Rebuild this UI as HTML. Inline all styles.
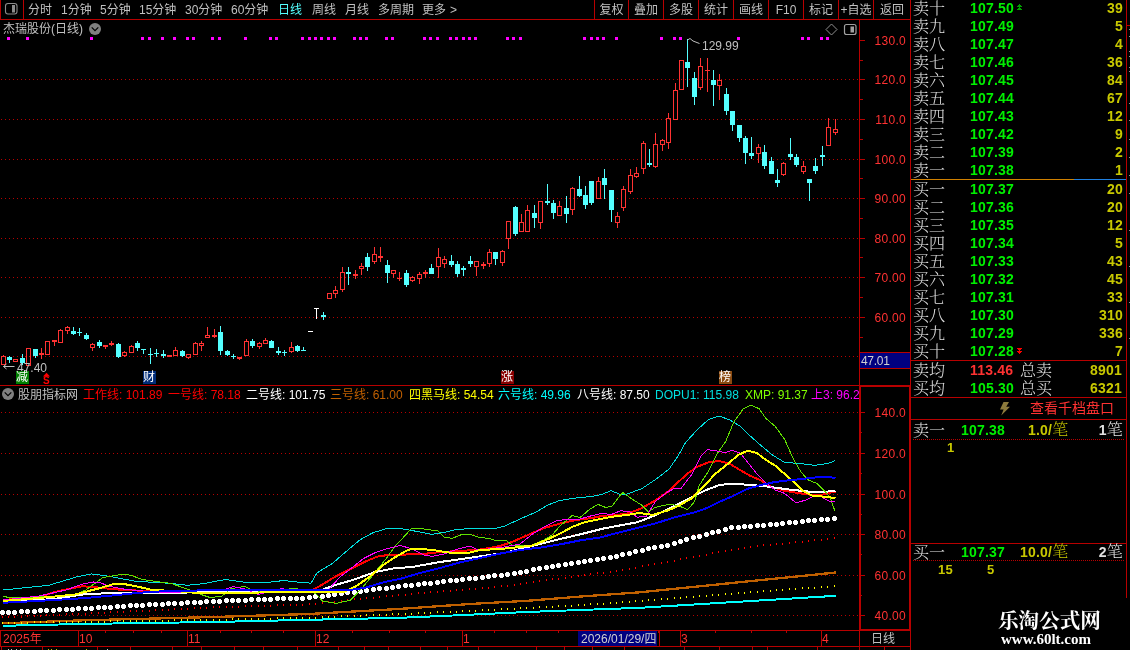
<!DOCTYPE html>
<html lang="zh"><head><meta charset="utf-8"><title>杰瑞股份(日线)</title>
<style>
html,body{margin:0;padding:0;background:#000;}
body{width:1130px;height:650px;position:relative;overflow:hidden;font-family:"Liberation Sans","Noto Sans CJK SC",sans-serif;font-size:12px;color:#c0c0c0;}
#w{position:absolute;left:0;top:0;width:1130px;height:650px;will-change:transform;}
.t{position:absolute;white-space:nowrap;line-height:14px;height:14px;}
.l{position:absolute;background:#b80000;}
svg{position:absolute;left:0;top:0;}
.tb{position:absolute;top:1px;height:18px;line-height:18px;white-space:nowrap;}
.lab{position:absolute;margin-top:1px;left:913px;font:16px/18px "Liberation Serif","Noto Serif CJK SC",serif;color:#e0e0e0;white-space:nowrap;font-weight:300;}
.pr{position:absolute;font:bold 14px/18px "Liberation Sans",sans-serif;white-space:nowrap;letter-spacing:0.2px;}
.g{color:#00f000;} .y{color:#c8c800;} .r{color:#ff3232;}
.ax{position:absolute;right:224px;width:50px;text-align:right;color:#ff3232;font:12px/14px "Liberation Sans",sans-serif;letter-spacing:0.3px;}
.hd{position:absolute;top:388px;line-height:14px;white-space:nowrap;}
</style></head><body><div id="w">

<div class="l" style="left:0;top:19px;width:911px;height:1px"></div>
<div class="l" style="left:0;top:0;width:1px;height:20px"></div>
<div class="l" style="left:23px;top:0;width:1px;height:20px"></div>
<div class="tb" style="left:28px;color:#c0c0c0">分时</div>
<div class="tb" style="left:61px;color:#c0c0c0">1分钟</div>
<div class="tb" style="left:100px;color:#c0c0c0">5分钟</div>
<div class="tb" style="left:139px;color:#c0c0c0">15分钟</div>
<div class="tb" style="left:185px;color:#c0c0c0">30分钟</div>
<div class="tb" style="left:231px;color:#c0c0c0">60分钟</div>
<div class="tb" style="left:278px;color:#54ffff">日线</div>
<div class="tb" style="left:312px;color:#c0c0c0">周线</div>
<div class="tb" style="left:345px;color:#c0c0c0">月线</div>
<div class="tb" style="left:378px;color:#c0c0c0">多周期</div>
<div class="tb" style="left:422px;color:#c0c0c0">更多<span style="margin-left:4px">&gt;</span></div>
<div class="l" style="left:594px;top:0;width:1px;height:19px"></div>
<div class="tb" style="left:595px;width:33px;text-align:center">复权</div>
<div class="l" style="left:628px;top:0;width:1px;height:19px"></div>
<div class="tb" style="left:629px;width:34px;text-align:center">叠加</div>
<div class="l" style="left:663px;top:0;width:1px;height:19px"></div>
<div class="tb" style="left:664px;width:34px;text-align:center">多股</div>
<div class="l" style="left:698px;top:0;width:1px;height:19px"></div>
<div class="tb" style="left:699px;width:34px;text-align:center">统计</div>
<div class="l" style="left:733px;top:0;width:1px;height:19px"></div>
<div class="tb" style="left:734px;width:34px;text-align:center">画线</div>
<div class="l" style="left:768px;top:0;width:1px;height:19px"></div>
<div class="tb" style="left:769px;width:34px;text-align:center">F10</div>
<div class="l" style="left:803px;top:0;width:1px;height:19px"></div>
<div class="tb" style="left:804px;width:34px;text-align:center">标记</div>
<div class="l" style="left:838px;top:0;width:1px;height:19px"></div>
<div class="tb" style="left:839px;width:34px;text-align:center">+自选</div>
<div class="l" style="left:873px;top:0;width:1px;height:19px"></div>
<div class="tb" style="left:874px;width:36px;text-align:center">返回</div>
<div class="l" style="left:910px;top:0;width:1px;height:650px"></div>
<div class="t" style="left:3px;top:22px">杰瑞股份(日线)</div>
<div class="ax" style="top:33.5px">130.0</div>
<div class="ax" style="top:72.5px">120.0</div>
<div class="ax" style="top:112.5px">110.0</div>
<div class="ax" style="top:152.5px">100.0</div>
<div class="ax" style="top:191.5px">90.00</div>
<div class="ax" style="top:231.5px">80.00</div>
<div class="ax" style="top:270.5px">70.00</div>
<div class="ax" style="top:310.5px">60.00</div>
<div class="ax" style="top:405.5px">140.0</div>
<div class="ax" style="top:446.5px">120.0</div>
<div class="ax" style="top:487.5px">100.0</div>
<div class="ax" style="top:527.5px">80.00</div>
<div class="ax" style="top:568.5px">60.00</div>
<div class="ax" style="top:608.5px">40.00</div>
<svg width="1130" height="650" viewBox="0 0 1130 650" shape-rendering="crispEdges">
<line x1="1" y1="79.5" x2="858" y2="79.5" stroke="#b80000" stroke-width="1" stroke-dasharray="1 3"/>
<line x1="1" y1="119.5" x2="858" y2="119.5" stroke="#b80000" stroke-width="1" stroke-dasharray="1 3"/>
<line x1="1" y1="159.5" x2="858" y2="159.5" stroke="#b80000" stroke-width="1" stroke-dasharray="1 3"/>
<line x1="1" y1="198.5" x2="858" y2="198.5" stroke="#b80000" stroke-width="1" stroke-dasharray="1 3"/>
<line x1="1" y1="238.5" x2="858" y2="238.5" stroke="#b80000" stroke-width="1" stroke-dasharray="1 3"/>
<line x1="1" y1="277.5" x2="858" y2="277.5" stroke="#b80000" stroke-width="1" stroke-dasharray="1 3"/>
<line x1="1" y1="317.5" x2="858" y2="317.5" stroke="#b80000" stroke-width="1" stroke-dasharray="1 3"/>
<line x1="1" y1="356.5" x2="858" y2="356.5" stroke="#b80000" stroke-width="1" stroke-dasharray="1 3"/>
<line x1="1" y1="412.5" x2="858" y2="412.5" stroke="#b80000" stroke-width="1" stroke-dasharray="1 3"/>
<line x1="1" y1="453.5" x2="858" y2="453.5" stroke="#b80000" stroke-width="1" stroke-dasharray="1 3"/>
<line x1="1" y1="494.5" x2="858" y2="494.5" stroke="#b80000" stroke-width="1" stroke-dasharray="1 3"/>
<line x1="1" y1="534.5" x2="858" y2="534.5" stroke="#b80000" stroke-width="1" stroke-dasharray="1 3"/>
<line x1="1" y1="575.5" x2="858" y2="575.5" stroke="#b80000" stroke-width="1" stroke-dasharray="1 3"/>
<line x1="1" y1="615.5" x2="858" y2="615.5" stroke="#b80000" stroke-width="1" stroke-dasharray="1 3"/>
<rect x="859" y="20" width="1" height="366" fill="#b80000"/>
<rect x="860" y="40" width="5" height="1" fill="#b80000"/>
<rect x="860" y="60" width="3" height="1" fill="#b80000"/>
<rect x="860" y="79" width="5" height="1" fill="#b80000"/>
<rect x="860" y="99" width="3" height="1" fill="#b80000"/>
<rect x="860" y="119" width="5" height="1" fill="#b80000"/>
<rect x="860" y="139" width="3" height="1" fill="#b80000"/>
<rect x="860" y="159" width="5" height="1" fill="#b80000"/>
<rect x="860" y="178" width="3" height="1" fill="#b80000"/>
<rect x="860" y="198" width="5" height="1" fill="#b80000"/>
<rect x="860" y="218" width="3" height="1" fill="#b80000"/>
<rect x="860" y="238" width="5" height="1" fill="#b80000"/>
<rect x="860" y="257" width="3" height="1" fill="#b80000"/>
<rect x="860" y="277" width="5" height="1" fill="#b80000"/>
<rect x="860" y="297" width="3" height="1" fill="#b80000"/>
<rect x="860" y="317" width="5" height="1" fill="#b80000"/>
<rect x="860" y="337" width="3" height="1" fill="#b80000"/>
<rect x="859" y="352" width="52" height="17" fill="#b80000"/>
<rect x="860" y="353" width="50" height="15" fill="#000080"/>
<rect x="0" y="385" width="911" height="1" fill="#b80000"/>
<rect x="859" y="385" width="2" height="246" fill="#b80000"/>
<rect x="859" y="385" width="52" height="2" fill="#b80000"/>
<rect x="859" y="629" width="52" height="2" fill="#b80000"/>
<rect x="909" y="385" width="2" height="246" fill="#b80000"/>
<rect x="859" y="630" width="1" height="17" fill="#b80000"/>
<rect x="861" y="412" width="4" height="1" fill="#b80000"/>
<rect x="861" y="432" width="1" height="1" fill="#b80000"/>
<rect x="861" y="453" width="4" height="1" fill="#b80000"/>
<rect x="861" y="473" width="1" height="1" fill="#b80000"/>
<rect x="861" y="494" width="4" height="1" fill="#b80000"/>
<rect x="861" y="514" width="1" height="1" fill="#b80000"/>
<rect x="861" y="534" width="4" height="1" fill="#b80000"/>
<rect x="861" y="554" width="1" height="1" fill="#b80000"/>
<rect x="861" y="575" width="4" height="1" fill="#b80000"/>
<rect x="861" y="595" width="1" height="1" fill="#b80000"/>
<rect x="861" y="615" width="4" height="1" fill="#b80000"/>
<rect x="0" y="630" width="859" height="1" fill="#b80000"/>
<rect x="0" y="646" width="911" height="1" fill="#b80000"/>
<rect x="0" y="630" width="1" height="17" fill="#b80000"/>
<rect x="78" y="630" width="1" height="16" fill="#b80000"/>
<rect x="187" y="630" width="1" height="16" fill="#b80000"/>
<rect x="315" y="630" width="1" height="16" fill="#b80000"/>
<rect x="462" y="630" width="1" height="16" fill="#b80000"/>
<rect x="680" y="630" width="1" height="16" fill="#b80000"/>
<rect x="821" y="630" width="1" height="16" fill="#b80000"/>
<rect x="105" y="631" width="1" height="2" fill="#b80000"/>
<rect x="133" y="631" width="1" height="2" fill="#b80000"/>
<rect x="161" y="631" width="1" height="2" fill="#b80000"/>
<rect x="220" y="631" width="1" height="2" fill="#b80000"/>
<rect x="251" y="631" width="1" height="2" fill="#b80000"/>
<rect x="283" y="631" width="1" height="2" fill="#b80000"/>
<rect x="352" y="631" width="1" height="2" fill="#b80000"/>
<rect x="389" y="631" width="1" height="2" fill="#b80000"/>
<rect x="425" y="631" width="1" height="2" fill="#b80000"/>
<rect x="494" y="631" width="1" height="2" fill="#b80000"/>
<rect x="526" y="631" width="1" height="2" fill="#b80000"/>
<rect x="558" y="631" width="1" height="2" fill="#b80000"/>
<rect x="658" y="631" width="1" height="2" fill="#b80000"/>
<rect x="715" y="631" width="1" height="2" fill="#b80000"/>
<rect x="751" y="631" width="1" height="2" fill="#b80000"/>
<rect x="786" y="631" width="1" height="2" fill="#b80000"/>
<rect x="1" y="647" width="1" height="3" fill="#b80000"/>
<rect x="42" y="647" width="1" height="3" fill="#b80000"/>
<rect x="97" y="647" width="1" height="3" fill="#b80000"/>
<rect x="130" y="647" width="1" height="3" fill="#b80000"/>
<rect x="172" y="647" width="1" height="3" fill="#b80000"/>
<rect x="201" y="647" width="1" height="3" fill="#b80000"/>
<rect x="234" y="647" width="1" height="3" fill="#b80000"/>
<rect x="263" y="647" width="1" height="3" fill="#b80000"/>
<rect x="297" y="647" width="1" height="3" fill="#b80000"/>
<rect x="338" y="647" width="1" height="3" fill="#b80000"/>
<rect x="364" y="647" width="1" height="3" fill="#b80000"/>
<rect x="388" y="647" width="1" height="3" fill="#b80000"/>
<rect x="420" y="647" width="1" height="3" fill="#b80000"/>
<rect x="447" y="647" width="1" height="3" fill="#b80000"/>
<rect x="478" y="647" width="1" height="3" fill="#b80000"/>
<rect x="536" y="647" width="1" height="3" fill="#b80000"/>
<rect x="564" y="647" width="1" height="3" fill="#b80000"/>
<rect x="592" y="647" width="1" height="3" fill="#b80000"/>
<rect x="624" y="647" width="1" height="3" fill="#b80000"/>
<rect x="684" y="647" width="1" height="3" fill="#b80000"/>
<rect x="719" y="647" width="1" height="3" fill="#b80000"/>
<rect x="752" y="647" width="1" height="3" fill="#b80000"/>
<rect x="767" y="647" width="1" height="3" fill="#b80000"/>
<rect x="817" y="647" width="1" height="3" fill="#b80000"/>
<rect x="859" y="647" width="1" height="3" fill="#b80000"/>
<rect x="884" y="647" width="1" height="3" fill="#b80000"/>
<rect x="578" y="631" width="79" height="15" fill="#000080"/>
<rect x="659" y="630" width="1" height="16" fill="#b80000"/>
<rect x="7" y="37" width="3" height="3" fill="#ff00ff"/>
<rect x="26" y="37" width="3" height="3" fill="#ff00ff"/>
<rect x="90" y="37" width="3" height="3" fill="#ff00ff"/>
<rect x="141" y="37" width="3" height="3" fill="#ff00ff"/>
<rect x="148" y="37" width="3" height="3" fill="#ff00ff"/>
<rect x="161" y="37" width="3" height="3" fill="#ff00ff"/>
<rect x="173" y="37" width="3" height="3" fill="#ff00ff"/>
<rect x="186" y="37" width="3" height="3" fill="#ff00ff"/>
<rect x="192" y="37" width="3" height="3" fill="#ff00ff"/>
<rect x="211" y="37" width="3" height="3" fill="#ff00ff"/>
<rect x="218" y="37" width="3" height="3" fill="#ff00ff"/>
<rect x="244" y="37" width="3" height="3" fill="#ff00ff"/>
<rect x="269" y="37" width="3" height="3" fill="#ff00ff"/>
<rect x="275" y="37" width="3" height="3" fill="#ff00ff"/>
<rect x="301" y="37" width="3" height="3" fill="#ff00ff"/>
<rect x="308" y="37" width="3" height="3" fill="#ff00ff"/>
<rect x="314" y="37" width="3" height="3" fill="#ff00ff"/>
<rect x="320" y="37" width="3" height="3" fill="#ff00ff"/>
<rect x="327" y="37" width="3" height="3" fill="#ff00ff"/>
<rect x="333" y="37" width="3" height="3" fill="#ff00ff"/>
<rect x="353" y="37" width="3" height="3" fill="#ff00ff"/>
<rect x="359" y="37" width="3" height="3" fill="#ff00ff"/>
<rect x="365" y="37" width="3" height="3" fill="#ff00ff"/>
<rect x="385" y="37" width="3" height="3" fill="#ff00ff"/>
<rect x="391" y="37" width="3" height="3" fill="#ff00ff"/>
<rect x="423" y="37" width="3" height="3" fill="#ff00ff"/>
<rect x="429" y="37" width="3" height="3" fill="#ff00ff"/>
<rect x="436" y="37" width="3" height="3" fill="#ff00ff"/>
<rect x="449" y="37" width="3" height="3" fill="#ff00ff"/>
<rect x="455" y="37" width="3" height="3" fill="#ff00ff"/>
<rect x="462" y="37" width="3" height="3" fill="#ff00ff"/>
<rect x="468" y="37" width="3" height="3" fill="#ff00ff"/>
<rect x="474" y="37" width="3" height="3" fill="#ff00ff"/>
<rect x="506" y="37" width="3" height="3" fill="#ff00ff"/>
<rect x="512" y="37" width="3" height="3" fill="#ff00ff"/>
<rect x="519" y="37" width="3" height="3" fill="#ff00ff"/>
<rect x="583" y="37" width="3" height="3" fill="#ff00ff"/>
<rect x="590" y="37" width="3" height="3" fill="#ff00ff"/>
<rect x="596" y="37" width="3" height="3" fill="#ff00ff"/>
<rect x="602" y="37" width="3" height="3" fill="#ff00ff"/>
<rect x="615" y="37" width="3" height="3" fill="#ff00ff"/>
<rect x="660" y="37" width="3" height="3" fill="#ff00ff"/>
<rect x="673" y="37" width="3" height="3" fill="#ff00ff"/>
<rect x="679" y="37" width="3" height="3" fill="#ff00ff"/>
<rect x="737" y="37" width="3" height="3" fill="#ff00ff"/>
<rect x="801" y="37" width="3" height="3" fill="#ff00ff"/>
<rect x="807" y="37" width="3" height="3" fill="#ff00ff"/>
<rect x="820" y="37" width="3" height="3" fill="#ff00ff"/>
<rect x="826" y="37" width="3" height="3" fill="#ff00ff"/>
<rect x="3" y="355" width="1" height="1" fill="#ff3232"/>
<rect x="1.5" y="356.5" width="4" height="8" fill="none" stroke="#ff3232" stroke-width="1"/>
<rect x="9" y="356" width="1" height="7" fill="#54ffff"/>
<rect x="7" y="357" width="5" height="3" fill="#54ffff"/>
<rect x="13.5" y="359.5" width="4" height="2" fill="none" stroke="#ff3232" stroke-width="1"/>
<rect x="22" y="354" width="1" height="11" fill="#54ffff"/>
<rect x="20" y="358" width="5" height="5" fill="#54ffff"/>
<rect x="26.5" y="348.5" width="4" height="17" fill="none" stroke="#ff3232" stroke-width="1"/>
<rect x="35" y="349" width="1" height="9" fill="#54ffff"/>
<rect x="33" y="349" width="5" height="7" fill="#54ffff"/>
<rect x="41" y="348" width="1" height="11" fill="#ff3232"/>
<rect x="39" y="353" width="5" height="2" fill="#ff3232"/>
<rect x="45.5" y="341.5" width="4" height="13" fill="none" stroke="#ff3232" stroke-width="1"/>
<rect x="54" y="340" width="1" height="6" fill="#ff3232"/>
<rect x="52" y="340" width="5" height="2" fill="#ff3232"/>
<rect x="60" y="329" width="1" height="1" fill="#ff3232"/>
<rect x="58.5" y="330.5" width="4" height="12" fill="none" stroke="#ff3232" stroke-width="1"/>
<rect x="67" y="326" width="1" height="1" fill="#ff3232"/>
<rect x="67" y="331" width="1" height="3" fill="#ff3232"/>
<rect x="65.5" y="327.5" width="4" height="3" fill="none" stroke="#ff3232" stroke-width="1"/>
<rect x="73" y="327" width="1" height="8" fill="#54ffff"/>
<rect x="71" y="331" width="5" height="3" fill="#54ffff"/>
<rect x="79" y="328" width="1" height="8" fill="#54ffff"/>
<rect x="77" y="332" width="5" height="1" fill="#54ffff"/>
<rect x="86" y="333" width="1" height="7" fill="#54ffff"/>
<rect x="84" y="335" width="5" height="4" fill="#54ffff"/>
<rect x="92" y="343" width="1" height="1" fill="#ff3232"/>
<rect x="92" y="348" width="1" height="3" fill="#ff3232"/>
<rect x="90.5" y="344.5" width="4" height="3" fill="none" stroke="#ff3232" stroke-width="1"/>
<rect x="99" y="340" width="1" height="8" fill="#54ffff"/>
<rect x="97" y="342" width="5" height="4" fill="#54ffff"/>
<rect x="105" y="345" width="1" height="4" fill="#ff3232"/>
<rect x="103" y="345" width="5" height="2" fill="#ff3232"/>
<rect x="111" y="341" width="1" height="5" fill="#ff3232"/>
<rect x="109" y="343" width="5" height="2" fill="#ff3232"/>
<rect x="118" y="343" width="1" height="15" fill="#54ffff"/>
<rect x="116" y="344" width="5" height="13" fill="#54ffff"/>
<rect x="124" y="351" width="1" height="1" fill="#ff3232"/>
<rect x="124" y="356" width="1" height="1" fill="#ff3232"/>
<rect x="122.5" y="352.5" width="4" height="3" fill="none" stroke="#ff3232" stroke-width="1"/>
<rect x="131" y="345" width="1" height="1" fill="#ff3232"/>
<rect x="129.5" y="346.5" width="4" height="6" fill="none" stroke="#ff3232" stroke-width="1"/>
<rect x="137" y="341" width="1" height="10" fill="#54ffff"/>
<rect x="135" y="343" width="5" height="5" fill="#54ffff"/>
<rect x="143" y="349" width="1" height="5" fill="#54ffff"/>
<rect x="141" y="349" width="5" height="1" fill="#54ffff"/>
<rect x="150" y="348" width="1" height="16" fill="#54ffff"/>
<rect x="148" y="354" width="5" height="1" fill="#54ffff"/>
<rect x="156" y="349" width="1" height="8" fill="#54ffff"/>
<rect x="154" y="353" width="5" height="1" fill="#54ffff"/>
<rect x="163" y="350" width="1" height="8" fill="#54ffff"/>
<rect x="161" y="354" width="5" height="2" fill="#54ffff"/>
<rect x="169" y="355" width="1" height="2" fill="#ff3232"/>
<rect x="167" y="355" width="5" height="2" fill="#ff3232"/>
<rect x="175" y="347" width="1" height="3" fill="#ff3232"/>
<rect x="173.5" y="350.5" width="4" height="5" fill="none" stroke="#ff3232" stroke-width="1"/>
<rect x="182" y="350" width="1" height="7" fill="#54ffff"/>
<rect x="180" y="351" width="5" height="5" fill="#54ffff"/>
<rect x="188" y="358" width="1" height="1" fill="#ff3232"/>
<rect x="186.5" y="354.5" width="4" height="3" fill="none" stroke="#ff3232" stroke-width="1"/>
<rect x="195" y="342" width="1" height="1" fill="#ff3232"/>
<rect x="193.5" y="343.5" width="4" height="11" fill="none" stroke="#ff3232" stroke-width="1"/>
<rect x="201" y="341" width="1" height="2" fill="#ff3232"/>
<rect x="201" y="346" width="1" height="5" fill="#ff3232"/>
<rect x="199.5" y="343.5" width="4" height="2" fill="none" stroke="#ff3232" stroke-width="1"/>
<rect x="207" y="327" width="1" height="8" fill="#ff3232"/>
<rect x="205.5" y="335.5" width="4" height="2" fill="none" stroke="#ff3232" stroke-width="1"/>
<rect x="214" y="329" width="1" height="9" fill="#ff3232"/>
<rect x="212" y="335" width="5" height="2" fill="#ff3232"/>
<rect x="220" y="326" width="1" height="29" fill="#54ffff"/>
<rect x="218" y="332" width="5" height="19" fill="#54ffff"/>
<rect x="227" y="350" width="1" height="6" fill="#54ffff"/>
<rect x="225" y="351" width="5" height="4" fill="#54ffff"/>
<rect x="233" y="354" width="1" height="5" fill="#54ffff"/>
<rect x="231" y="356" width="5" height="1" fill="#54ffff"/>
<rect x="239" y="357" width="1" height="3" fill="#ff3232"/>
<rect x="237" y="357" width="5" height="2" fill="#ff3232"/>
<rect x="246" y="339" width="1" height="2" fill="#ff3232"/>
<rect x="244.5" y="341.5" width="4" height="14" fill="none" stroke="#ff3232" stroke-width="1"/>
<rect x="252" y="339" width="1" height="9" fill="#54ffff"/>
<rect x="250" y="341" width="5" height="5" fill="#54ffff"/>
<rect x="259" y="342" width="1" height="1" fill="#ff3232"/>
<rect x="259" y="347" width="1" height="2" fill="#ff3232"/>
<rect x="257.5" y="343.5" width="4" height="3" fill="none" stroke="#ff3232" stroke-width="1"/>
<rect x="265" y="338" width="1" height="2" fill="#ff3232"/>
<rect x="263.5" y="340.5" width="4" height="3" fill="none" stroke="#ff3232" stroke-width="1"/>
<rect x="271" y="340" width="1" height="8" fill="#54ffff"/>
<rect x="269" y="341" width="5" height="7" fill="#54ffff"/>
<rect x="278" y="347" width="1" height="8" fill="#54ffff"/>
<rect x="276" y="351" width="5" height="2" fill="#54ffff"/>
<rect x="284" y="350" width="1" height="6" fill="#54ffff"/>
<rect x="282" y="352" width="5" height="1" fill="#54ffff"/>
<rect x="291" y="342" width="1" height="5" fill="#ff3232"/>
<rect x="291" y="352" width="1" height="1" fill="#ff3232"/>
<rect x="289.5" y="347.5" width="4" height="4" fill="none" stroke="#ff3232" stroke-width="1"/>
<rect x="297" y="345" width="1" height="7" fill="#54ffff"/>
<rect x="295" y="346" width="5" height="5" fill="#54ffff"/>
<rect x="303" y="347" width="1" height="4" fill="#54ffff"/>
<rect x="301" y="350" width="5" height="1" fill="#54ffff"/>
<rect x="310" y="331" width="1" height="1" fill="#ffffff"/>
<rect x="308" y="331" width="5" height="1" fill="#ffffff"/>
<rect x="316" y="308" width="1" height="11" fill="#ffffff"/>
<rect x="314" y="308" width="5" height="1" fill="#ffffff"/>
<rect x="323" y="312" width="1" height="8" fill="#54ffff"/>
<rect x="321" y="315" width="5" height="2" fill="#54ffff"/>
<rect x="327.5" y="293.5" width="4" height="5" fill="none" stroke="#ff3232" stroke-width="1"/>
<rect x="335" y="286" width="1" height="4" fill="#ff3232"/>
<rect x="335" y="294" width="1" height="4" fill="#ff3232"/>
<rect x="333.5" y="290.5" width="4" height="3" fill="none" stroke="#ff3232" stroke-width="1"/>
<rect x="342" y="267" width="1" height="5" fill="#ff3232"/>
<rect x="342" y="290" width="1" height="2" fill="#ff3232"/>
<rect x="340.5" y="272.5" width="4" height="17" fill="none" stroke="#ff3232" stroke-width="1"/>
<rect x="348" y="267" width="1" height="18" fill="#54ffff"/>
<rect x="346" y="272" width="5" height="2" fill="#54ffff"/>
<rect x="355" y="270" width="1" height="9" fill="#ff3232"/>
<rect x="353" y="274" width="5" height="2" fill="#ff3232"/>
<rect x="361" y="263" width="1" height="3" fill="#ff3232"/>
<rect x="361" y="269" width="1" height="6" fill="#ff3232"/>
<rect x="359.5" y="266.5" width="4" height="2" fill="none" stroke="#ff3232" stroke-width="1"/>
<rect x="367" y="253" width="1" height="18" fill="#54ffff"/>
<rect x="365" y="257" width="5" height="10" fill="#54ffff"/>
<rect x="374" y="247" width="1" height="7" fill="#ff3232"/>
<rect x="374" y="262" width="1" height="2" fill="#ff3232"/>
<rect x="372.5" y="254.5" width="4" height="7" fill="none" stroke="#ff3232" stroke-width="1"/>
<rect x="380" y="247" width="1" height="15" fill="#ff3232"/>
<rect x="378" y="256" width="5" height="2" fill="#ff3232"/>
<rect x="387" y="260" width="1" height="23" fill="#54ffff"/>
<rect x="385" y="265" width="5" height="8" fill="#54ffff"/>
<rect x="393" y="274" width="1" height="4" fill="#ff3232"/>
<rect x="391.5" y="270.5" width="4" height="3" fill="none" stroke="#ff3232" stroke-width="1"/>
<rect x="399" y="272" width="1" height="9" fill="#ff3232"/>
<rect x="397" y="278" width="5" height="1" fill="#ff3232"/>
<rect x="406" y="270" width="1" height="17" fill="#54ffff"/>
<rect x="404" y="273" width="5" height="12" fill="#54ffff"/>
<rect x="412" y="276" width="1" height="1" fill="#ff3232"/>
<rect x="412" y="281" width="1" height="1" fill="#ff3232"/>
<rect x="410.5" y="277.5" width="4" height="3" fill="none" stroke="#ff3232" stroke-width="1"/>
<rect x="419" y="272" width="1" height="2" fill="#ff3232"/>
<rect x="419" y="279" width="1" height="5" fill="#ff3232"/>
<rect x="417.5" y="274.5" width="4" height="4" fill="none" stroke="#ff3232" stroke-width="1"/>
<rect x="425" y="270" width="1" height="8" fill="#ff3232"/>
<rect x="423" y="272" width="5" height="2" fill="#ff3232"/>
<rect x="431" y="264" width="1" height="10" fill="#54ffff"/>
<rect x="429" y="268" width="5" height="6" fill="#54ffff"/>
<rect x="438" y="248" width="1" height="9" fill="#ff3232"/>
<rect x="438" y="267" width="1" height="11" fill="#ff3232"/>
<rect x="436.5" y="257.5" width="4" height="9" fill="none" stroke="#ff3232" stroke-width="1"/>
<rect x="444" y="256" width="1" height="3" fill="#ff3232"/>
<rect x="444" y="264" width="1" height="4" fill="#ff3232"/>
<rect x="442.5" y="259.5" width="4" height="4" fill="none" stroke="#ff3232" stroke-width="1"/>
<rect x="451" y="255" width="1" height="12" fill="#54ffff"/>
<rect x="449" y="261" width="5" height="4" fill="#54ffff"/>
<rect x="457" y="261" width="1" height="16" fill="#54ffff"/>
<rect x="455" y="264" width="5" height="10" fill="#54ffff"/>
<rect x="463" y="266" width="1" height="10" fill="#54ffff"/>
<rect x="461" y="268" width="5" height="2" fill="#54ffff"/>
<rect x="470" y="256" width="1" height="11" fill="#54ffff"/>
<rect x="468" y="261" width="5" height="3" fill="#54ffff"/>
<rect x="476" y="267" width="1" height="9" fill="#ff3232"/>
<rect x="474.5" y="261.5" width="4" height="5" fill="none" stroke="#ff3232" stroke-width="1"/>
<rect x="483" y="262" width="1" height="7" fill="#ff3232"/>
<rect x="481" y="264" width="5" height="2" fill="#ff3232"/>
<rect x="489" y="249" width="1" height="3" fill="#ff3232"/>
<rect x="489" y="264" width="1" height="3" fill="#ff3232"/>
<rect x="487.5" y="252.5" width="4" height="11" fill="none" stroke="#ff3232" stroke-width="1"/>
<rect x="495" y="252" width="1" height="13" fill="#54ffff"/>
<rect x="493" y="252" width="5" height="7" fill="#54ffff"/>
<rect x="502" y="250" width="1" height="1" fill="#ff3232"/>
<rect x="502" y="263" width="1" height="3" fill="#ff3232"/>
<rect x="500.5" y="251.5" width="4" height="11" fill="none" stroke="#ff3232" stroke-width="1"/>
<rect x="508" y="239" width="1" height="10" fill="#ff3232"/>
<rect x="506.5" y="221.5" width="4" height="17" fill="none" stroke="#ff3232" stroke-width="1"/>
<rect x="515" y="206" width="1" height="30" fill="#54ffff"/>
<rect x="513" y="207" width="5" height="27" fill="#54ffff"/>
<rect x="521" y="214" width="1" height="8" fill="#ff3232"/>
<rect x="519.5" y="222.5" width="4" height="9" fill="none" stroke="#ff3232" stroke-width="1"/>
<rect x="527" y="205" width="1" height="5" fill="#ff3232"/>
<rect x="525.5" y="210.5" width="4" height="21" fill="none" stroke="#ff3232" stroke-width="1"/>
<rect x="534" y="205" width="1" height="23" fill="#54ffff"/>
<rect x="532" y="213" width="5" height="5" fill="#54ffff"/>
<rect x="540" y="223" width="1" height="6" fill="#ff3232"/>
<rect x="538.5" y="201.5" width="4" height="21" fill="none" stroke="#ff3232" stroke-width="1"/>
<rect x="547" y="184" width="1" height="21" fill="#54ffff"/>
<rect x="545" y="201" width="5" height="2" fill="#54ffff"/>
<rect x="553" y="200" width="1" height="19" fill="#54ffff"/>
<rect x="551" y="203" width="5" height="10" fill="#54ffff"/>
<rect x="559" y="201" width="1" height="5" fill="#ff3232"/>
<rect x="557.5" y="206.5" width="4" height="9" fill="none" stroke="#ff3232" stroke-width="1"/>
<rect x="566" y="196" width="1" height="27" fill="#54ffff"/>
<rect x="564" y="208" width="5" height="6" fill="#54ffff"/>
<rect x="572" y="187" width="1" height="1" fill="#ff3232"/>
<rect x="572" y="210" width="1" height="5" fill="#ff3232"/>
<rect x="570.5" y="188.5" width="4" height="21" fill="none" stroke="#ff3232" stroke-width="1"/>
<rect x="579" y="176" width="1" height="21" fill="#54ffff"/>
<rect x="577" y="189" width="5" height="7" fill="#54ffff"/>
<rect x="585" y="186" width="1" height="23" fill="#54ffff"/>
<rect x="583" y="195" width="5" height="10" fill="#54ffff"/>
<rect x="591" y="181" width="1" height="24" fill="#54ffff"/>
<rect x="589" y="181" width="5" height="22" fill="#54ffff"/>
<rect x="598" y="177" width="1" height="4" fill="#ff3232"/>
<rect x="596.5" y="181.5" width="4" height="17" fill="none" stroke="#ff3232" stroke-width="1"/>
<rect x="604" y="169" width="1" height="30" fill="#54ffff"/>
<rect x="602" y="178" width="5" height="7" fill="#54ffff"/>
<rect x="611" y="190" width="1" height="32" fill="#54ffff"/>
<rect x="609" y="190" width="5" height="20" fill="#54ffff"/>
<rect x="617" y="212" width="1" height="4" fill="#ff3232"/>
<rect x="617" y="223" width="1" height="5" fill="#ff3232"/>
<rect x="615.5" y="216.5" width="4" height="6" fill="none" stroke="#ff3232" stroke-width="1"/>
<rect x="623" y="186" width="1" height="3" fill="#ff3232"/>
<rect x="623" y="208" width="1" height="3" fill="#ff3232"/>
<rect x="621.5" y="189.5" width="4" height="18" fill="none" stroke="#ff3232" stroke-width="1"/>
<rect x="630" y="169" width="1" height="6" fill="#ff3232"/>
<rect x="630" y="192" width="1" height="2" fill="#ff3232"/>
<rect x="628.5" y="175.5" width="4" height="16" fill="none" stroke="#ff3232" stroke-width="1"/>
<rect x="636" y="167" width="1" height="6" fill="#ff3232"/>
<rect x="636" y="177" width="1" height="1" fill="#ff3232"/>
<rect x="634.5" y="173.5" width="4" height="3" fill="none" stroke="#ff3232" stroke-width="1"/>
<rect x="643" y="141" width="1" height="2" fill="#ff3232"/>
<rect x="643" y="169" width="1" height="5" fill="#ff3232"/>
<rect x="641.5" y="143.5" width="4" height="25" fill="none" stroke="#ff3232" stroke-width="1"/>
<rect x="649" y="149" width="1" height="18" fill="#54ffff"/>
<rect x="647" y="163" width="5" height="2" fill="#54ffff"/>
<rect x="655" y="133" width="1" height="11" fill="#ff3232"/>
<rect x="655" y="167" width="1" height="1" fill="#ff3232"/>
<rect x="653.5" y="144.5" width="4" height="22" fill="none" stroke="#ff3232" stroke-width="1"/>
<rect x="662" y="139" width="1" height="1" fill="#ff3232"/>
<rect x="662" y="145" width="1" height="6" fill="#ff3232"/>
<rect x="660.5" y="140.5" width="4" height="4" fill="none" stroke="#ff3232" stroke-width="1"/>
<rect x="668" y="113" width="1" height="5" fill="#ff3232"/>
<rect x="668" y="143" width="1" height="6" fill="#ff3232"/>
<rect x="666.5" y="118.5" width="4" height="24" fill="none" stroke="#ff3232" stroke-width="1"/>
<rect x="675" y="83" width="1" height="7" fill="#ff3232"/>
<rect x="673.5" y="90.5" width="4" height="29" fill="none" stroke="#ff3232" stroke-width="1"/>
<rect x="679.5" y="60.5" width="4" height="29" fill="none" stroke="#ff3232" stroke-width="1"/>
<rect x="687" y="39" width="1" height="48" fill="#54ffff"/>
<rect x="685" y="62" width="5" height="6" fill="#54ffff"/>
<rect x="694" y="72" width="1" height="33" fill="#54ffff"/>
<rect x="692" y="78" width="5" height="19" fill="#54ffff"/>
<rect x="700" y="58" width="1" height="8" fill="#ff3232"/>
<rect x="700" y="88" width="1" height="2" fill="#ff3232"/>
<rect x="698.5" y="66.5" width="4" height="21" fill="none" stroke="#ff3232" stroke-width="1"/>
<rect x="707" y="58" width="1" height="34" fill="#ff3232"/>
<rect x="705" y="70" width="5" height="1" fill="#ff3232"/>
<rect x="713" y="70" width="1" height="36" fill="#54ffff"/>
<rect x="711" y="80" width="5" height="5" fill="#54ffff"/>
<rect x="719" y="74" width="1" height="6" fill="#ff3232"/>
<rect x="719" y="86" width="1" height="14" fill="#ff3232"/>
<rect x="717.5" y="80.5" width="4" height="5" fill="none" stroke="#ff3232" stroke-width="1"/>
<rect x="726" y="88" width="1" height="27" fill="#54ffff"/>
<rect x="724" y="94" width="5" height="17" fill="#54ffff"/>
<rect x="732" y="111" width="1" height="20" fill="#54ffff"/>
<rect x="730" y="111" width="5" height="14" fill="#54ffff"/>
<rect x="739" y="125" width="1" height="17" fill="#54ffff"/>
<rect x="737" y="125" width="5" height="13" fill="#54ffff"/>
<rect x="745" y="136" width="1" height="28" fill="#54ffff"/>
<rect x="743" y="138" width="5" height="15" fill="#54ffff"/>
<rect x="751" y="137" width="1" height="22" fill="#54ffff"/>
<rect x="749" y="153" width="5" height="3" fill="#54ffff"/>
<rect x="758" y="144" width="1" height="3" fill="#ff3232"/>
<rect x="758" y="154" width="1" height="9" fill="#ff3232"/>
<rect x="756.5" y="147.5" width="4" height="6" fill="none" stroke="#ff3232" stroke-width="1"/>
<rect x="764" y="145" width="1" height="24" fill="#54ffff"/>
<rect x="762" y="152" width="5" height="14" fill="#54ffff"/>
<rect x="771" y="157" width="1" height="17" fill="#54ffff"/>
<rect x="769" y="161" width="5" height="13" fill="#54ffff"/>
<rect x="777" y="169" width="1" height="18" fill="#54ffff"/>
<rect x="775" y="180" width="5" height="3" fill="#54ffff"/>
<rect x="783" y="162" width="1" height="1" fill="#ff3232"/>
<rect x="783" y="175" width="1" height="1" fill="#ff3232"/>
<rect x="781.5" y="163.5" width="4" height="11" fill="none" stroke="#ff3232" stroke-width="1"/>
<rect x="790" y="138" width="1" height="22" fill="#54ffff"/>
<rect x="788" y="154" width="5" height="3" fill="#54ffff"/>
<rect x="796" y="154" width="1" height="13" fill="#54ffff"/>
<rect x="794" y="157" width="5" height="8" fill="#54ffff"/>
<rect x="803" y="161" width="1" height="5" fill="#ff3232"/>
<rect x="803" y="172" width="1" height="2" fill="#ff3232"/>
<rect x="801.5" y="166.5" width="4" height="5" fill="none" stroke="#ff3232" stroke-width="1"/>
<rect x="809" y="179" width="1" height="22" fill="#54ffff"/>
<rect x="807" y="179" width="5" height="4" fill="#54ffff"/>
<rect x="815" y="158" width="1" height="16" fill="#54ffff"/>
<rect x="813" y="166" width="5" height="5" fill="#54ffff"/>
<rect x="822" y="146" width="1" height="20" fill="#54ffff"/>
<rect x="820" y="155" width="5" height="2" fill="#54ffff"/>
<rect x="828" y="118" width="1" height="9" fill="#ff3232"/>
<rect x="826.5" y="127.5" width="4" height="18" fill="none" stroke="#ff3232" stroke-width="1"/>
<rect x="835" y="119" width="1" height="10" fill="#ff3232"/>
<rect x="835" y="133" width="1" height="2" fill="#ff3232"/>
<rect x="833.5" y="129.5" width="4" height="3" fill="none" stroke="#ff3232" stroke-width="1"/>
<path d="M687.5 40 L690 38.5 L693 41 L699.5 43.5" fill="none" stroke="#c0c0c0" stroke-width="1" shape-rendering="auto"/>
<path d="M3.5 366.5 H14.5 M3.5 366.5 l3 -2.5 M3.5 366.5 l3 2.5" fill="none" stroke="#c0c0c0" stroke-width="1" shape-rendering="auto"/>
<polyline points="3.0,600.0 39.0,597.0 58.4,591.0 81.8,586.3 93.5,586.9 109.0,588.8 124.6,590.0 148.0,591.0 200.0,591.0 311.0,591.0 324.6,583.2 336.3,576.0 348.0,570.2 365.5,561.4 379.0,556.0 394.7,554.6 420.0,554.4 440.0,552.0 460.0,551.0 480.0,549.6 500.0,546.0 512.0,542.0 528.0,535.0 544.0,528.0 560.0,523.6 576.0,520.0 592.0,518.0 604.0,515.6 613.8,515.3 627.7,513.5 641.5,508.4 655.4,500.3 669.0,491.0 678.4,481.9 687.7,473.4 697.0,466.9 708.4,462.3 718.8,461.0 729.0,463.4 740.7,470.4 750.0,475.7 761.5,480.7 770.7,486.5 784.5,490.8 798.4,493.0 812.2,495.0 821.5,494.8 830.7,492.6 835.5,492.0" fill="none" stroke="#ff0000" stroke-width="2" stroke-linejoin="round" />
<rect x="2" y="616" width="1" height="2" fill="#ff0000"/>
<rect x="8" y="616" width="1" height="2" fill="#ff0000"/>
<rect x="14" y="616" width="1" height="2" fill="#ff0000"/>
<rect x="21" y="616" width="1" height="2" fill="#ff0000"/>
<rect x="27" y="615" width="1" height="2" fill="#ff0000"/>
<rect x="34" y="615" width="1" height="2" fill="#ff0000"/>
<rect x="40" y="615" width="1" height="2" fill="#ff0000"/>
<rect x="46" y="614" width="1" height="2" fill="#ff0000"/>
<rect x="53" y="614" width="1" height="2" fill="#ff0000"/>
<rect x="59" y="614" width="1" height="2" fill="#ff0000"/>
<rect x="66" y="613" width="1" height="2" fill="#ff0000"/>
<rect x="72" y="613" width="1" height="2" fill="#ff0000"/>
<rect x="78" y="613" width="1" height="2" fill="#ff0000"/>
<rect x="85" y="613" width="1" height="2" fill="#ff0000"/>
<rect x="91" y="612" width="1" height="2" fill="#ff0000"/>
<rect x="98" y="612" width="1" height="2" fill="#ff0000"/>
<rect x="104" y="612" width="1" height="2" fill="#ff0000"/>
<rect x="110" y="611" width="1" height="2" fill="#ff0000"/>
<rect x="117" y="611" width="1" height="2" fill="#ff0000"/>
<rect x="123" y="611" width="1" height="2" fill="#ff0000"/>
<rect x="130" y="610" width="1" height="2" fill="#ff0000"/>
<rect x="136" y="610" width="1" height="2" fill="#ff0000"/>
<rect x="142" y="610" width="1" height="2" fill="#ff0000"/>
<rect x="149" y="610" width="1" height="2" fill="#ff0000"/>
<rect x="155" y="609" width="1" height="2" fill="#ff0000"/>
<rect x="162" y="609" width="1" height="2" fill="#ff0000"/>
<rect x="168" y="609" width="1" height="2" fill="#ff0000"/>
<rect x="174" y="608" width="1" height="2" fill="#ff0000"/>
<rect x="181" y="608" width="1" height="2" fill="#ff0000"/>
<rect x="187" y="608" width="1" height="2" fill="#ff0000"/>
<rect x="194" y="607" width="1" height="2" fill="#ff0000"/>
<rect x="200" y="607" width="1" height="2" fill="#ff0000"/>
<rect x="206" y="607" width="1" height="2" fill="#ff0000"/>
<rect x="213" y="606" width="1" height="2" fill="#ff0000"/>
<rect x="219" y="606" width="1" height="2" fill="#ff0000"/>
<rect x="226" y="606" width="1" height="2" fill="#ff0000"/>
<rect x="232" y="606" width="1" height="2" fill="#ff0000"/>
<rect x="238" y="606" width="1" height="2" fill="#ff0000"/>
<rect x="245" y="605" width="1" height="2" fill="#ff0000"/>
<rect x="251" y="605" width="1" height="2" fill="#ff0000"/>
<rect x="258" y="605" width="1" height="2" fill="#ff0000"/>
<rect x="264" y="605" width="1" height="2" fill="#ff0000"/>
<rect x="270" y="605" width="1" height="2" fill="#ff0000"/>
<rect x="277" y="604" width="1" height="2" fill="#ff0000"/>
<rect x="283" y="604" width="1" height="2" fill="#ff0000"/>
<rect x="290" y="604" width="1" height="2" fill="#ff0000"/>
<rect x="296" y="604" width="1" height="2" fill="#ff0000"/>
<rect x="302" y="604" width="1" height="2" fill="#ff0000"/>
<rect x="309" y="603" width="1" height="2" fill="#ff0000"/>
<rect x="315" y="603" width="1" height="2" fill="#ff0000"/>
<rect x="322" y="602" width="1" height="2" fill="#ff0000"/>
<rect x="328" y="601" width="1" height="2" fill="#ff0000"/>
<rect x="334" y="601" width="1" height="2" fill="#ff0000"/>
<rect x="341" y="600" width="1" height="2" fill="#ff0000"/>
<rect x="347" y="599" width="1" height="2" fill="#ff0000"/>
<rect x="354" y="598" width="1" height="2" fill="#ff0000"/>
<rect x="360" y="598" width="1" height="2" fill="#ff0000"/>
<rect x="366" y="597" width="1" height="2" fill="#ff0000"/>
<rect x="373" y="597" width="1" height="2" fill="#ff0000"/>
<rect x="379" y="596" width="1" height="2" fill="#ff0000"/>
<rect x="386" y="595" width="1" height="2" fill="#ff0000"/>
<rect x="392" y="595" width="1" height="2" fill="#ff0000"/>
<rect x="398" y="594" width="1" height="2" fill="#ff0000"/>
<rect x="405" y="594" width="1" height="2" fill="#ff0000"/>
<rect x="411" y="593" width="1" height="2" fill="#ff0000"/>
<rect x="418" y="592" width="1" height="2" fill="#ff0000"/>
<rect x="424" y="592" width="1" height="2" fill="#ff0000"/>
<rect x="430" y="591" width="1" height="2" fill="#ff0000"/>
<rect x="437" y="591" width="1" height="2" fill="#ff0000"/>
<rect x="443" y="590" width="1" height="2" fill="#ff0000"/>
<rect x="450" y="590" width="1" height="2" fill="#ff0000"/>
<rect x="456" y="589" width="1" height="2" fill="#ff0000"/>
<rect x="462" y="589" width="1" height="2" fill="#ff0000"/>
<rect x="469" y="588" width="1" height="2" fill="#ff0000"/>
<rect x="475" y="588" width="1" height="2" fill="#ff0000"/>
<rect x="482" y="587" width="1" height="2" fill="#ff0000"/>
<rect x="488" y="587" width="1" height="2" fill="#ff0000"/>
<rect x="494" y="586" width="1" height="2" fill="#ff0000"/>
<rect x="501" y="585" width="1" height="2" fill="#ff0000"/>
<rect x="507" y="585" width="1" height="2" fill="#ff0000"/>
<rect x="514" y="584" width="1" height="2" fill="#ff0000"/>
<rect x="520" y="583" width="1" height="2" fill="#ff0000"/>
<rect x="526" y="582" width="1" height="2" fill="#ff0000"/>
<rect x="533" y="581" width="1" height="2" fill="#ff0000"/>
<rect x="539" y="580" width="1" height="2" fill="#ff0000"/>
<rect x="546" y="579" width="1" height="2" fill="#ff0000"/>
<rect x="552" y="578" width="1" height="2" fill="#ff0000"/>
<rect x="558" y="578" width="1" height="2" fill="#ff0000"/>
<rect x="565" y="577" width="1" height="2" fill="#ff0000"/>
<rect x="571" y="576" width="1" height="2" fill="#ff0000"/>
<rect x="578" y="575" width="1" height="2" fill="#ff0000"/>
<rect x="584" y="574" width="1" height="2" fill="#ff0000"/>
<rect x="590" y="573" width="1" height="2" fill="#ff0000"/>
<rect x="597" y="572" width="1" height="2" fill="#ff0000"/>
<rect x="603" y="572" width="1" height="2" fill="#ff0000"/>
<rect x="610" y="571" width="1" height="2" fill="#ff0000"/>
<rect x="616" y="570" width="1" height="2" fill="#ff0000"/>
<rect x="622" y="569" width="1" height="2" fill="#ff0000"/>
<rect x="629" y="568" width="1" height="2" fill="#ff0000"/>
<rect x="635" y="567" width="1" height="2" fill="#ff0000"/>
<rect x="642" y="565" width="1" height="2" fill="#ff0000"/>
<rect x="648" y="564" width="1" height="2" fill="#ff0000"/>
<rect x="654" y="563" width="1" height="2" fill="#ff0000"/>
<rect x="661" y="562" width="1" height="2" fill="#ff0000"/>
<rect x="667" y="561" width="1" height="2" fill="#ff0000"/>
<rect x="674" y="560" width="1" height="2" fill="#ff0000"/>
<rect x="680" y="558" width="1" height="2" fill="#ff0000"/>
<rect x="686" y="557" width="1" height="2" fill="#ff0000"/>
<rect x="693" y="556" width="1" height="2" fill="#ff0000"/>
<rect x="699" y="555" width="1" height="2" fill="#ff0000"/>
<rect x="706" y="554" width="1" height="2" fill="#ff0000"/>
<rect x="712" y="552" width="1" height="2" fill="#ff0000"/>
<rect x="718" y="551" width="1" height="2" fill="#ff0000"/>
<rect x="725" y="550" width="1" height="2" fill="#ff0000"/>
<rect x="731" y="549" width="1" height="2" fill="#ff0000"/>
<rect x="738" y="548" width="1" height="2" fill="#ff0000"/>
<rect x="744" y="547" width="1" height="2" fill="#ff0000"/>
<rect x="750" y="546" width="1" height="2" fill="#ff0000"/>
<rect x="757" y="545" width="1" height="2" fill="#ff0000"/>
<rect x="763" y="544" width="1" height="2" fill="#ff0000"/>
<rect x="770" y="544" width="1" height="2" fill="#ff0000"/>
<rect x="776" y="543" width="1" height="2" fill="#ff0000"/>
<rect x="782" y="543" width="1" height="2" fill="#ff0000"/>
<rect x="789" y="542" width="1" height="2" fill="#ff0000"/>
<rect x="795" y="541" width="1" height="2" fill="#ff0000"/>
<rect x="802" y="541" width="1" height="2" fill="#ff0000"/>
<rect x="808" y="540" width="1" height="2" fill="#ff0000"/>
<rect x="814" y="539" width="1" height="2" fill="#ff0000"/>
<rect x="821" y="539" width="1" height="2" fill="#ff0000"/>
<rect x="827" y="538" width="1" height="2" fill="#ff0000"/>
<rect x="834" y="537" width="1" height="2" fill="#ff0000"/>
<polyline points="3.0,602.0 54.5,599.0 85.7,594.0 116.8,593.0 155.8,593.0 220.0,592.0 316.8,591.6 336.3,584.8 355.8,579.0 375.0,572.0 394.7,568.2 412.0,567.0 440.0,562.0 480.0,556.4 504.0,553.0 532.0,546.0 560.0,539.0 580.0,534.4 604.0,528.4 618.5,525.7 637.0,522.3 655.4,515.3 673.8,506.0 692.3,496.9 706.0,490.0 720.0,484.9 733.8,483.5 747.6,484.9 761.5,485.8 775.3,487.7 789.2,489.5 803.0,491.0 816.8,492.3 835.5,491.0" fill="none" stroke="#ffffff" stroke-width="2" stroke-linejoin="round" />
<polyline points="3.0,623.3 80.0,620.4 214.0,617.0 309.0,614.0 400.0,608.9 470.0,604.0 527.0,600.8 580.0,596.6 640.0,592.3 836.0,572.5" fill="none" stroke="#c06000" stroke-width="2.3" stroke-linejoin="round" />
<rect x="2" y="622" width="1" height="2" fill="#ffff00"/>
<rect x="8" y="622" width="1" height="2" fill="#ffff00"/>
<rect x="14" y="622" width="1" height="2" fill="#ffff00"/>
<rect x="21" y="622" width="1" height="2" fill="#ffff00"/>
<rect x="27" y="622" width="1" height="2" fill="#ffff00"/>
<rect x="34" y="621" width="1" height="2" fill="#ffff00"/>
<rect x="40" y="621" width="1" height="2" fill="#ffff00"/>
<rect x="46" y="621" width="1" height="2" fill="#ffff00"/>
<rect x="53" y="621" width="1" height="2" fill="#ffff00"/>
<rect x="59" y="621" width="1" height="2" fill="#ffff00"/>
<rect x="66" y="621" width="1" height="2" fill="#ffff00"/>
<rect x="72" y="621" width="1" height="2" fill="#ffff00"/>
<rect x="78" y="621" width="1" height="2" fill="#ffff00"/>
<rect x="85" y="621" width="1" height="2" fill="#ffff00"/>
<rect x="91" y="621" width="1" height="2" fill="#ffff00"/>
<rect x="98" y="621" width="1" height="2" fill="#ffff00"/>
<rect x="104" y="621" width="1" height="2" fill="#ffff00"/>
<rect x="110" y="620" width="1" height="2" fill="#ffff00"/>
<rect x="117" y="620" width="1" height="2" fill="#ffff00"/>
<rect x="123" y="620" width="1" height="2" fill="#ffff00"/>
<rect x="130" y="620" width="1" height="2" fill="#ffff00"/>
<rect x="136" y="620" width="1" height="2" fill="#ffff00"/>
<rect x="142" y="620" width="1" height="2" fill="#ffff00"/>
<rect x="149" y="620" width="1" height="2" fill="#ffff00"/>
<rect x="155" y="620" width="1" height="2" fill="#ffff00"/>
<rect x="162" y="620" width="1" height="2" fill="#ffff00"/>
<rect x="168" y="620" width="1" height="2" fill="#ffff00"/>
<rect x="174" y="619" width="1" height="2" fill="#ffff00"/>
<rect x="181" y="619" width="1" height="2" fill="#ffff00"/>
<rect x="187" y="619" width="1" height="2" fill="#ffff00"/>
<rect x="194" y="619" width="1" height="2" fill="#ffff00"/>
<rect x="200" y="619" width="1" height="2" fill="#ffff00"/>
<rect x="206" y="619" width="1" height="2" fill="#ffff00"/>
<rect x="213" y="619" width="1" height="2" fill="#ffff00"/>
<rect x="219" y="619" width="1" height="2" fill="#ffff00"/>
<rect x="226" y="619" width="1" height="2" fill="#ffff00"/>
<rect x="232" y="618" width="1" height="2" fill="#ffff00"/>
<rect x="238" y="618" width="1" height="2" fill="#ffff00"/>
<rect x="245" y="618" width="1" height="2" fill="#ffff00"/>
<rect x="251" y="618" width="1" height="2" fill="#ffff00"/>
<rect x="258" y="618" width="1" height="2" fill="#ffff00"/>
<rect x="264" y="618" width="1" height="2" fill="#ffff00"/>
<rect x="270" y="618" width="1" height="2" fill="#ffff00"/>
<rect x="277" y="617" width="1" height="2" fill="#ffff00"/>
<rect x="283" y="617" width="1" height="2" fill="#ffff00"/>
<rect x="290" y="617" width="1" height="2" fill="#ffff00"/>
<rect x="296" y="617" width="1" height="2" fill="#ffff00"/>
<rect x="302" y="617" width="1" height="2" fill="#ffff00"/>
<rect x="309" y="617" width="1" height="2" fill="#ffff00"/>
<rect x="315" y="617" width="1" height="2" fill="#ffff00"/>
<rect x="322" y="616" width="1" height="2" fill="#ffff00"/>
<rect x="328" y="616" width="1" height="2" fill="#ffff00"/>
<rect x="334" y="616" width="1" height="2" fill="#ffff00"/>
<rect x="341" y="615" width="1" height="2" fill="#ffff00"/>
<rect x="347" y="615" width="1" height="2" fill="#ffff00"/>
<rect x="354" y="615" width="1" height="2" fill="#ffff00"/>
<rect x="360" y="615" width="1" height="2" fill="#ffff00"/>
<rect x="366" y="614" width="1" height="2" fill="#ffff00"/>
<rect x="373" y="614" width="1" height="2" fill="#ffff00"/>
<rect x="379" y="614" width="1" height="2" fill="#ffff00"/>
<rect x="386" y="614" width="1" height="2" fill="#ffff00"/>
<rect x="392" y="613" width="1" height="2" fill="#ffff00"/>
<rect x="398" y="613" width="1" height="2" fill="#ffff00"/>
<rect x="405" y="613" width="1" height="2" fill="#ffff00"/>
<rect x="411" y="613" width="1" height="2" fill="#ffff00"/>
<rect x="418" y="612" width="1" height="2" fill="#ffff00"/>
<rect x="424" y="612" width="1" height="2" fill="#ffff00"/>
<rect x="430" y="612" width="1" height="2" fill="#ffff00"/>
<rect x="437" y="611" width="1" height="2" fill="#ffff00"/>
<rect x="443" y="611" width="1" height="2" fill="#ffff00"/>
<rect x="450" y="611" width="1" height="2" fill="#ffff00"/>
<rect x="456" y="611" width="1" height="2" fill="#ffff00"/>
<rect x="462" y="610" width="1" height="2" fill="#ffff00"/>
<rect x="469" y="610" width="1" height="2" fill="#ffff00"/>
<rect x="475" y="610" width="1" height="2" fill="#ffff00"/>
<rect x="482" y="609" width="1" height="2" fill="#ffff00"/>
<rect x="488" y="609" width="1" height="2" fill="#ffff00"/>
<rect x="494" y="609" width="1" height="2" fill="#ffff00"/>
<rect x="501" y="608" width="1" height="2" fill="#ffff00"/>
<rect x="507" y="608" width="1" height="2" fill="#ffff00"/>
<rect x="514" y="608" width="1" height="2" fill="#ffff00"/>
<rect x="520" y="607" width="1" height="2" fill="#ffff00"/>
<rect x="526" y="607" width="1" height="2" fill="#ffff00"/>
<rect x="533" y="607" width="1" height="2" fill="#ffff00"/>
<rect x="539" y="606" width="1" height="2" fill="#ffff00"/>
<rect x="546" y="606" width="1" height="2" fill="#ffff00"/>
<rect x="552" y="606" width="1" height="2" fill="#ffff00"/>
<rect x="558" y="605" width="1" height="2" fill="#ffff00"/>
<rect x="565" y="605" width="1" height="2" fill="#ffff00"/>
<rect x="571" y="605" width="1" height="2" fill="#ffff00"/>
<rect x="578" y="604" width="1" height="2" fill="#ffff00"/>
<rect x="584" y="604" width="1" height="2" fill="#ffff00"/>
<rect x="590" y="603" width="1" height="2" fill="#ffff00"/>
<rect x="597" y="603" width="1" height="2" fill="#ffff00"/>
<rect x="603" y="603" width="1" height="2" fill="#ffff00"/>
<rect x="610" y="602" width="1" height="2" fill="#ffff00"/>
<rect x="616" y="602" width="1" height="2" fill="#ffff00"/>
<rect x="622" y="601" width="1" height="2" fill="#ffff00"/>
<rect x="629" y="601" width="1" height="2" fill="#ffff00"/>
<rect x="635" y="600" width="1" height="2" fill="#ffff00"/>
<rect x="642" y="600" width="1" height="2" fill="#ffff00"/>
<rect x="648" y="599" width="1" height="2" fill="#ffff00"/>
<rect x="654" y="599" width="1" height="2" fill="#ffff00"/>
<rect x="661" y="598" width="1" height="2" fill="#ffff00"/>
<rect x="667" y="598" width="1" height="2" fill="#ffff00"/>
<rect x="674" y="597" width="1" height="2" fill="#ffff00"/>
<rect x="680" y="597" width="1" height="2" fill="#ffff00"/>
<rect x="686" y="596" width="1" height="2" fill="#ffff00"/>
<rect x="693" y="596" width="1" height="2" fill="#ffff00"/>
<rect x="699" y="595" width="1" height="2" fill="#ffff00"/>
<rect x="706" y="595" width="1" height="2" fill="#ffff00"/>
<rect x="712" y="594" width="1" height="2" fill="#ffff00"/>
<rect x="718" y="594" width="1" height="2" fill="#ffff00"/>
<rect x="725" y="593" width="1" height="2" fill="#ffff00"/>
<rect x="731" y="593" width="1" height="2" fill="#ffff00"/>
<rect x="738" y="592" width="1" height="2" fill="#ffff00"/>
<rect x="744" y="592" width="1" height="2" fill="#ffff00"/>
<rect x="750" y="591" width="1" height="2" fill="#ffff00"/>
<rect x="757" y="591" width="1" height="2" fill="#ffff00"/>
<rect x="763" y="590" width="1" height="2" fill="#ffff00"/>
<rect x="770" y="590" width="1" height="2" fill="#ffff00"/>
<rect x="776" y="589" width="1" height="2" fill="#ffff00"/>
<rect x="782" y="589" width="1" height="2" fill="#ffff00"/>
<rect x="789" y="588" width="1" height="2" fill="#ffff00"/>
<rect x="795" y="588" width="1" height="2" fill="#ffff00"/>
<rect x="802" y="587" width="1" height="2" fill="#ffff00"/>
<rect x="808" y="587" width="1" height="2" fill="#ffff00"/>
<rect x="814" y="587" width="1" height="2" fill="#ffff00"/>
<rect x="821" y="586" width="1" height="2" fill="#ffff00"/>
<rect x="827" y="586" width="1" height="2" fill="#ffff00"/>
<rect x="834" y="585" width="1" height="2" fill="#ffff00"/>
<polyline points="3.0,625.8 80.0,624.0 214.0,622.0 309.0,619.8 400.0,617.8 464.0,615.0 527.0,612.0 580.0,610.0 640.0,607.8 836.0,595.8" fill="none" stroke="#00ffff" stroke-width="2" stroke-linejoin="round" />
<path d="M1 610h3v1h1v3h-1v1h-3v-1h-1v-3h1zM7 610h3v1h1v3h-1v1h-3v-1h-1v-3h1zM13 610h3v1h1v3h-1v1h-3v-1h-1v-3h1zM20 609h3v1h1v3h-1v1h-3v-1h-1v-3h1zM26 609h3v1h1v3h-1v1h-3v-1h-1v-3h1zM33 609h3v1h1v3h-1v1h-3v-1h-1v-3h1zM39 608h3v1h1v3h-1v1h-3v-1h-1v-3h1zM45 608h3v1h1v3h-1v1h-3v-1h-1v-3h1zM52 608h3v1h1v3h-1v1h-3v-1h-1v-3h1zM58 607h3v1h1v3h-1v1h-3v-1h-1v-3h1zM65 607h3v1h1v3h-1v1h-3v-1h-1v-3h1zM71 607h3v1h1v3h-1v1h-3v-1h-1v-3h1zM77 606h3v1h1v3h-1v1h-3v-1h-1v-3h1zM84 606h3v1h1v3h-1v1h-3v-1h-1v-3h1zM90 606h3v1h1v3h-1v1h-3v-1h-1v-3h1zM97 605h3v1h1v3h-1v1h-3v-1h-1v-3h1zM103 605h3v1h1v3h-1v1h-3v-1h-1v-3h1zM109 605h3v1h1v3h-1v1h-3v-1h-1v-3h1zM116 604h3v1h1v3h-1v1h-3v-1h-1v-3h1zM122 604h3v1h1v3h-1v1h-3v-1h-1v-3h1zM129 603h3v1h1v3h-1v1h-3v-1h-1v-3h1zM135 603h3v1h1v3h-1v1h-3v-1h-1v-3h1zM141 603h3v1h1v3h-1v1h-3v-1h-1v-3h1zM148 602h3v1h1v3h-1v1h-3v-1h-1v-3h1zM154 602h3v1h1v3h-1v1h-3v-1h-1v-3h1zM161 602h3v1h1v3h-1v1h-3v-1h-1v-3h1zM167 601h3v1h1v3h-1v1h-3v-1h-1v-3h1zM173 601h3v1h1v3h-1v1h-3v-1h-1v-3h1zM180 601h3v1h1v3h-1v1h-3v-1h-1v-3h1zM186 600h3v1h1v3h-1v1h-3v-1h-1v-3h1zM193 600h3v1h1v3h-1v1h-3v-1h-1v-3h1zM199 600h3v1h1v3h-1v1h-3v-1h-1v-3h1zM205 599h3v1h1v3h-1v1h-3v-1h-1v-3h1zM212 599h3v1h1v3h-1v1h-3v-1h-1v-3h1zM218 599h3v1h1v3h-1v1h-3v-1h-1v-3h1zM225 598h3v1h1v3h-1v1h-3v-1h-1v-3h1zM231 598h3v1h1v3h-1v1h-3v-1h-1v-3h1zM237 598h3v1h1v3h-1v1h-3v-1h-1v-3h1zM244 598h3v1h1v3h-1v1h-3v-1h-1v-3h1zM250 597h3v1h1v3h-1v1h-3v-1h-1v-3h1zM257 597h3v1h1v3h-1v1h-3v-1h-1v-3h1zM263 597h3v1h1v3h-1v1h-3v-1h-1v-3h1zM269 597h3v1h1v3h-1v1h-3v-1h-1v-3h1zM276 596h3v1h1v3h-1v1h-3v-1h-1v-3h1zM282 596h3v1h1v3h-1v1h-3v-1h-1v-3h1zM289 596h3v1h1v3h-1v1h-3v-1h-1v-3h1zM295 596h3v1h1v3h-1v1h-3v-1h-1v-3h1zM301 596h3v1h1v3h-1v1h-3v-1h-1v-3h1zM308 595h3v1h1v3h-1v1h-3v-1h-1v-3h1zM314 594h3v1h1v3h-1v1h-3v-1h-1v-3h1zM321 594h3v1h1v3h-1v1h-3v-1h-1v-3h1zM327 593h3v1h1v3h-1v1h-3v-1h-1v-3h1zM333 592h3v1h1v3h-1v1h-3v-1h-1v-3h1zM340 591h3v1h1v3h-1v1h-3v-1h-1v-3h1zM346 590h3v1h1v3h-1v1h-3v-1h-1v-3h1zM353 590h3v1h1v3h-1v1h-3v-1h-1v-3h1zM359 589h3v1h1v3h-1v1h-3v-1h-1v-3h1zM365 588h3v1h1v3h-1v1h-3v-1h-1v-3h1zM372 587h3v1h1v3h-1v1h-3v-1h-1v-3h1zM378 586h3v1h1v3h-1v1h-3v-1h-1v-3h1zM385 586h3v1h1v3h-1v1h-3v-1h-1v-3h1zM391 585h3v1h1v3h-1v1h-3v-1h-1v-3h1zM397 584h3v1h1v3h-1v1h-3v-1h-1v-3h1zM404 583h3v1h1v3h-1v1h-3v-1h-1v-3h1zM410 583h3v1h1v3h-1v1h-3v-1h-1v-3h1zM417 582h3v1h1v3h-1v1h-3v-1h-1v-3h1zM423 581h3v1h1v3h-1v1h-3v-1h-1v-3h1zM429 581h3v1h1v3h-1v1h-3v-1h-1v-3h1zM436 580h3v1h1v3h-1v1h-3v-1h-1v-3h1zM442 579h3v1h1v3h-1v1h-3v-1h-1v-3h1zM449 578h3v1h1v3h-1v1h-3v-1h-1v-3h1zM455 578h3v1h1v3h-1v1h-3v-1h-1v-3h1zM461 577h3v1h1v3h-1v1h-3v-1h-1v-3h1zM468 576h3v1h1v3h-1v1h-3v-1h-1v-3h1zM474 576h3v1h1v3h-1v1h-3v-1h-1v-3h1zM481 575h3v1h1v3h-1v1h-3v-1h-1v-3h1zM487 574h3v1h1v3h-1v1h-3v-1h-1v-3h1zM493 573h3v1h1v3h-1v1h-3v-1h-1v-3h1zM500 573h3v1h1v3h-1v1h-3v-1h-1v-3h1zM506 572h3v1h1v3h-1v1h-3v-1h-1v-3h1zM513 571h3v1h1v3h-1v1h-3v-1h-1v-3h1zM519 570h3v1h1v3h-1v1h-3v-1h-1v-3h1zM525 569h3v1h1v3h-1v1h-3v-1h-1v-3h1zM532 567h3v1h1v3h-1v1h-3v-1h-1v-3h1zM538 566h3v1h1v3h-1v1h-3v-1h-1v-3h1zM545 565h3v1h1v3h-1v1h-3v-1h-1v-3h1zM551 564h3v1h1v3h-1v1h-3v-1h-1v-3h1zM557 563h3v1h1v3h-1v1h-3v-1h-1v-3h1zM564 562h3v1h1v3h-1v1h-3v-1h-1v-3h1zM570 561h3v1h1v3h-1v1h-3v-1h-1v-3h1zM577 560h3v1h1v3h-1v1h-3v-1h-1v-3h1zM583 559h3v1h1v3h-1v1h-3v-1h-1v-3h1zM589 558h3v1h1v3h-1v1h-3v-1h-1v-3h1zM596 557h3v1h1v3h-1v1h-3v-1h-1v-3h1zM602 556h3v1h1v3h-1v1h-3v-1h-1v-3h1zM609 555h3v1h1v3h-1v1h-3v-1h-1v-3h1zM615 554h3v1h1v3h-1v1h-3v-1h-1v-3h1zM621 552h3v1h1v3h-1v1h-3v-1h-1v-3h1zM628 551h3v1h1v3h-1v1h-3v-1h-1v-3h1zM634 549h3v1h1v3h-1v1h-3v-1h-1v-3h1zM641 548h3v1h1v3h-1v1h-3v-1h-1v-3h1zM647 546h3v1h1v3h-1v1h-3v-1h-1v-3h1zM653 545h3v1h1v3h-1v1h-3v-1h-1v-3h1zM660 544h3v1h1v3h-1v1h-3v-1h-1v-3h1zM666 543h3v1h1v3h-1v1h-3v-1h-1v-3h1zM673 541h3v1h1v3h-1v1h-3v-1h-1v-3h1zM679 539h3v1h1v3h-1v1h-3v-1h-1v-3h1zM685 537h3v1h1v3h-1v1h-3v-1h-1v-3h1zM692 535h3v1h1v3h-1v1h-3v-1h-1v-3h1zM698 534h3v1h1v3h-1v1h-3v-1h-1v-3h1zM705 532h3v1h1v3h-1v1h-3v-1h-1v-3h1zM711 530h3v1h1v3h-1v1h-3v-1h-1v-3h1zM717 529h3v1h1v3h-1v1h-3v-1h-1v-3h1zM724 527h3v1h1v3h-1v1h-3v-1h-1v-3h1zM730 525h3v1h1v3h-1v1h-3v-1h-1v-3h1zM737 525h3v1h1v3h-1v1h-3v-1h-1v-3h1zM743 524h3v1h1v3h-1v1h-3v-1h-1v-3h1zM749 524h3v1h1v3h-1v1h-3v-1h-1v-3h1zM756 523h3v1h1v3h-1v1h-3v-1h-1v-3h1zM762 523h3v1h1v3h-1v1h-3v-1h-1v-3h1zM769 522h3v1h1v3h-1v1h-3v-1h-1v-3h1zM775 522h3v1h1v3h-1v1h-3v-1h-1v-3h1zM781 521h3v1h1v3h-1v1h-3v-1h-1v-3h1zM788 520h3v1h1v3h-1v1h-3v-1h-1v-3h1zM794 520h3v1h1v3h-1v1h-3v-1h-1v-3h1zM801 519h3v1h1v3h-1v1h-3v-1h-1v-3h1zM807 518h3v1h1v3h-1v1h-3v-1h-1v-3h1zM813 518h3v1h1v3h-1v1h-3v-1h-1v-3h1zM820 517h3v1h1v3h-1v1h-3v-1h-1v-3h1zM826 517h3v1h1v3h-1v1h-3v-1h-1v-3h1zM833 516h3v1h1v3h-1v1h-3v-1h-1v-3h1z" fill="#ffffff"/>
<polyline points="3.0,590.0 48.7,585.3 78.0,576.5 91.5,574.0 105.0,575.6 120.7,578.5 136.0,581.4 155.8,582.4 171.0,583.4 187.0,585.3 202.5,583.8 225.3,579.5 248.7,582.8 268.0,582.4 283.7,580.5 301.0,582.4 311.0,583.2 316.8,573.0 332.4,563.4 346.0,551.7 359.7,540.0 373.0,532.7 388.5,528.0 400.0,528.4 420.0,532.0 432.0,534.4 444.0,532.4 456.0,529.4 476.0,528.4 492.0,529.0 504.0,526.4 520.0,519.0 536.0,512.0 548.0,505.0 560.0,500.4 576.0,498.0 592.0,496.4 602.0,494.4 611.0,490.6 620.0,494.4 625.4,494.6 641.5,488.8 655.4,479.6 669.0,469.2 678.4,455.4 685.4,442.7 697.0,430.0 708.4,419.6 718.8,416.0 729.0,419.6 740.7,426.5 750.0,435.8 761.5,446.0 773.0,455.4 784.5,462.3 798.4,463.4 814.5,465.3 828.4,463.4 834.8,460.7" fill="none" stroke="#00e0e0" stroke-width="1" stroke-linejoin="round" />
<polyline points="3.0,596.0 7.8,597.4 19.5,598.0 39.0,597.0 58.0,596.0 74.0,595.0 85.7,590.0 103.0,577.5 124.6,574.0 132.0,575.6 142.0,579.5 155.8,581.4 171.0,583.4 187.0,589.0 202.5,595.0 209.7,597.4 221.4,596.5 231.0,588.7 244.8,586.3 250.6,589.6 268.0,593.0 281.8,590.0 293.5,588.3 309.0,590.6 316.8,594.5 322.7,601.3 336.3,603.3 350.0,600.4 359.7,590.6 371.3,577.0 387.0,557.5 396.0,545.0 400.0,541.0 412.0,528.0 424.0,529.0 438.0,531.0 444.0,537.0 452.0,538.4 462.0,534.4 470.0,534.4 480.0,537.6 490.0,538.4 496.0,541.0 506.0,540.4 512.0,545.0 520.0,545.6 532.0,545.0 544.0,540.0 552.0,535.0 560.0,526.0 572.0,515.6 580.0,517.6 590.0,509.0 598.0,504.4 606.0,507.6 612.0,506.0 620.0,495.6 623.0,492.7 632.3,499.2 641.5,505.0 648.4,511.9 655.4,507.3 669.0,504.3 678.4,505.7 687.7,509.6 694.6,501.5 699.2,485.4 708.4,471.5 717.6,453.0 725.7,441.5 733.8,422.0 743.0,409.2 751.0,405.0 759.2,408.8 766.0,418.5 775.3,426.5 784.5,439.2 793.8,460.0 800.7,471.5 807.6,479.6 816.8,483.5 826.0,492.3 830.7,499.2 834.8,510.7" fill="none" stroke="#60e000" stroke-width="1" stroke-linejoin="round" />
<polyline points="3.0,600.0 39.0,596.0 66.0,590.0 81.8,584.3 93.5,582.0 101.0,583.0 109.0,586.3 124.6,589.2 140.0,590.8 155.8,592.0 175.0,592.7 194.7,591.0 220.0,590.8 233.0,586.7 245.0,589.0 258.4,594.5 281.8,588.7 301.0,592.0 328.5,589.6 340.0,577.0 353.8,566.3 363.5,558.5 375.0,552.7 387.0,548.8 400.5,545.5 412.0,549.0 424.0,555.0 432.0,556.4 444.0,554.0 458.0,549.0 470.0,546.0 476.0,549.0 488.0,549.0 504.0,547.0 520.0,544.0 532.0,534.4 544.0,527.0 556.0,521.0 568.0,519.0 580.0,519.0 592.0,515.6 604.0,513.0 610.0,515.0 620.8,510.7 630.0,511.9 637.0,517.2 646.0,516.5 655.4,501.5 667.0,492.3 673.8,488.8 680.7,488.8 692.3,473.8 701.5,455.4 707.3,449.6 715.3,450.7 724.6,452.6 732.6,450.3 740.7,453.5 747.6,462.3 756.9,473.8 766.0,483.0 775.3,490.0 784.5,493.4 796.0,502.7 805.3,500.3 814.5,495.7 821.5,496.9 828.4,501.0 834.8,501.5" fill="none" stroke="#ff00ff" stroke-width="1" stroke-linejoin="round" />
<polyline points="3.0,601.0 39.0,598.0 74.0,594.7 97.4,588.8 113.0,584.3 122.7,583.8 136.3,586.3 152.0,590.0 175.0,591.0 194.7,592.7 220.0,593.5 260.0,592.5 344.0,592.0 355.8,586.3 369.4,577.0 383.0,565.3 394.7,557.5 406.4,550.7 412.0,549.0 430.0,549.6 452.0,553.0 468.0,553.0 480.0,550.0 500.0,549.0 520.0,547.0 532.0,545.6 544.0,541.0 560.0,533.6 572.0,527.0 584.0,522.4 600.0,519.0 613.8,516.5 627.7,514.9 639.2,513.0 653.0,514.9 667.0,510.7 678.4,506.0 692.3,498.0 703.8,486.5 715.3,473.8 726.9,464.6 738.4,454.9 747.6,450.7 756.9,453.0 766.0,460.0 775.3,465.7 784.5,473.8 793.8,481.9 803.0,491.0 812.2,495.7 821.5,496.4 835.5,498.0" fill="none" stroke="#ffff00" stroke-width="2" stroke-linejoin="round" />
<polyline points="3.0,602.8 54.5,600.0 85.7,598.0 116.8,595.0 148.0,592.0 175.0,590.8 220.0,590.2 348.0,590.2 365.5,587.7 385.0,581.9 400.0,579.0 420.0,573.0 440.0,568.0 460.0,562.4 480.0,558.0 500.0,553.6 520.0,550.0 540.0,547.6 560.0,544.4 580.0,540.4 600.0,537.5 618.5,532.6 637.0,528.0 655.4,523.4 673.8,517.6 692.3,513.0 706.0,508.4 720.0,501.5 733.8,495.7 747.6,488.8 761.5,484.9 775.3,481.9 789.2,480.3 803.0,478.9 816.8,477.3 826.0,476.6 835.5,478.0" fill="none" stroke="#0000ff" stroke-width="2" stroke-linejoin="round" />
<g shape-rendering="auto">
<rect x="5.5" y="3.5" width="11.5" height="10.5" rx="2.5" fill="none" stroke="#8c8c8c" stroke-width="1.1"/><rect x="12" y="5" width="3" height="7.5" fill="#8c8c8c"/>
<circle cx="95" cy="29" r="6" fill="#808080"/><path d="M91.7 27.3 L95 30.6 L98.3 27.3" fill="none" stroke="#000" stroke-width="1.2"/>
<path d="M831.5 24 L837 29.5 L831.5 35 L826 29.5 Z" fill="none" stroke="#909090" stroke-width="1"/>
<rect x="844.5" y="24.5" width="11.5" height="10" rx="2" fill="none" stroke="#a0a0a0" stroke-width="1.2"/><rect x="850.5" y="26.5" width="3.5" height="6" fill="#a0a0a0"/>
<circle cx="8" cy="394" r="6" fill="#808080"/><path d="M4.7 392.3 L8 395.6 L11.3 392.3" fill="none" stroke="#000" stroke-width="1.2"/>
</g>
</svg>
<div class="t" style="left:702px;top:39px;">129.99</div>
<div class="t" style="left:17px;top:361px;">47.40</div>
<div class="t" style="left:861px;top:354px;color:#d0d0d0;letter-spacing:-0.3px">47.01</div>
<div class="t" style="left:16px;top:371px;width:13px;height:13px;line-height:13px;background:#008000;color:#fff">减</div>
<div class="t" style="left:43px;top:375px;color:#ff0000;font-weight:bold;font-size:10px;line-height:11px;height:11px">S</div>
<svg width="10" height="5" style="left:42px;top:372px"><path d="M1 4.5 L4.5 0.8 L8 4.5 Z" fill="#ff0000"/></svg>
<div class="t" style="left:143px;top:371px;width:13px;height:13px;line-height:13px;background:#002c78;color:#fff">财</div>
<div class="t" style="left:501px;top:371px;width:13px;height:13px;line-height:13px;background:#880000;color:#fff">涨</div>
<div class="t" style="left:719px;top:371px;width:13px;height:13px;line-height:13px;background:#8a4a10;color:#fff">榜</div>
<div class="hd" style="left:18px;color:#c0c0c0">股朋指标网</div>
<div class="hd" style="left:83px;color:#ff0000">工作线: 101.89</div>
<div class="hd" style="left:168px;color:#ff0000">一号线: 78.18</div>
<div class="hd" style="left:246px;color:#ffffff">二号线: 101.75</div>
<div class="hd" style="left:330px;color:#c06000">三号线: 61.00</div>
<div class="hd" style="left:409px;color:#ffff00">四黑马线: 54.54</div>
<div class="hd" style="left:498px;color:#00ffff">六号线: 49.96</div>
<div class="hd" style="left:577px;color:#ffffff">八号线: 87.50</div>
<div class="hd" style="left:655px;color:#00e0e0">DOPU1: 115.98</div>
<div class="hd" style="left:745px;color:#80ff00">XMP: 91.37</div>
<div class="hd" style="left:811px;color:#ff00ff;width:48px;overflow:hidden">上3: 96.2</div>
<div class="t" style="left:3px;top:632px;color:#ff3232">2025年</div>
<div class="t" style="left:79px;top:632px;color:#ff3232">10</div>
<div class="t" style="left:188px;top:632px;color:#ff3232">11</div>
<div class="t" style="left:316px;top:632px;color:#ff3232">12</div>
<div class="t" style="left:463px;top:632px;color:#ff3232">1</div>
<div class="t" style="left:681px;top:632px;color:#ff3232">3</div>
<div class="t" style="left:822px;top:632px;color:#ff3232">4</div>
<div class="t" style="left:581px;top:632px;color:#d0d0d0">2026/01/29/四</div>
<div class="t" style="left:871px;top:632px;">日线</div>
<div class="l" style="left:1126px;top:0;width:1px;height:601px"></div>
<div class="l" style="left:1126px;top:25px;width:4px;height:1px"></div>
<div class="lab" style="top:-1px">卖十</div>
<div class="pr g" style="left:970px;top:-1px">107.50</div>
<div class="pr y" style="right:7px;top:-1px">39</div>
<div class="lab" style="top:17px">卖九</div>
<div class="pr g" style="left:970px;top:17px">107.49</div>
<div class="pr y" style="right:7px;top:17px">5</div>
<div class="lab" style="top:35px">卖八</div>
<div class="pr g" style="left:970px;top:35px">107.47</div>
<div class="pr y" style="right:7px;top:35px">4</div>
<div class="lab" style="top:53px">卖七</div>
<div class="pr g" style="left:970px;top:53px">107.46</div>
<div class="pr y" style="right:7px;top:53px">36</div>
<div class="lab" style="top:71px">卖六</div>
<div class="pr g" style="left:970px;top:71px">107.45</div>
<div class="pr y" style="right:7px;top:71px">84</div>
<div class="lab" style="top:89px">卖五</div>
<div class="pr g" style="left:970px;top:89px">107.44</div>
<div class="pr y" style="right:7px;top:89px">67</div>
<div class="lab" style="top:107px">卖四</div>
<div class="pr g" style="left:970px;top:107px">107.43</div>
<div class="pr y" style="right:7px;top:107px">12</div>
<div class="lab" style="top:125px">卖三</div>
<div class="pr g" style="left:970px;top:125px">107.42</div>
<div class="pr y" style="right:7px;top:125px">9</div>
<div class="lab" style="top:143px">卖二</div>
<div class="pr g" style="left:970px;top:143px">107.39</div>
<div class="pr y" style="right:7px;top:143px">2</div>
<div class="lab" style="top:161px">卖一</div>
<div class="pr g" style="left:970px;top:161px">107.38</div>
<div class="pr y" style="right:7px;top:161px">1</div>
<div class="lab" style="top:180px">买一</div>
<div class="pr g" style="left:970px;top:180px">107.37</div>
<div class="pr y" style="right:7px;top:180px">20</div>
<div class="lab" style="top:198px">买二</div>
<div class="pr g" style="left:970px;top:198px">107.36</div>
<div class="pr y" style="right:7px;top:198px">20</div>
<div class="lab" style="top:216px">买三</div>
<div class="pr g" style="left:970px;top:216px">107.35</div>
<div class="pr y" style="right:7px;top:216px">12</div>
<div class="lab" style="top:234px">买四</div>
<div class="pr g" style="left:970px;top:234px">107.34</div>
<div class="pr y" style="right:7px;top:234px">5</div>
<div class="lab" style="top:252px">买五</div>
<div class="pr g" style="left:970px;top:252px">107.33</div>
<div class="pr y" style="right:7px;top:252px">43</div>
<div class="lab" style="top:270px">买六</div>
<div class="pr g" style="left:970px;top:270px">107.32</div>
<div class="pr y" style="right:7px;top:270px">45</div>
<div class="lab" style="top:288px">买七</div>
<div class="pr g" style="left:970px;top:288px">107.31</div>
<div class="pr y" style="right:7px;top:288px">33</div>
<div class="lab" style="top:306px">买八</div>
<div class="pr g" style="left:970px;top:306px">107.30</div>
<div class="pr y" style="right:7px;top:306px">310</div>
<div class="lab" style="top:324px">买九</div>
<div class="pr g" style="left:970px;top:324px">107.29</div>
<div class="pr y" style="right:7px;top:324px">336</div>
<div class="lab" style="top:342px">买十</div>
<div class="pr g" style="left:970px;top:342px">107.28</div>
<div class="pr y" style="right:7px;top:342px">7</div>
<div style="position:absolute;left:911px;top:179px;width:163px;height:1px;background:#d08000"></div>
<div style="position:absolute;left:1074px;top:179px;width:52px;height:1px;background:#2080e0"></div>
<div class="l" style="left:911px;top:360px;width:216px;height:1px"></div>
<div class="l" style="left:911px;top:397px;width:216px;height:1px"></div>
<div class="lab" style="top:361px">卖均</div><div class="pr r" style="left:970px;top:361px">113.46</div><div class="lab" style="left:1020px;top:361px">总卖</div><div class="pr y" style="right:8px;top:361px">8901</div>
<div class="lab" style="top:379px">买均</div><div class="pr g" style="left:970px;top:379px">105.30</div><div class="lab" style="left:1020px;top:379px">总买</div><div class="pr y" style="right:8px;top:379px">6321</div>
<div class="t" style="left:1030px;top:400px;font-size:14px;line-height:16px;height:16px;color:#ff3232">查看千档盘口</div>
<svg width="14" height="14" style="left:998px;top:402px" viewBox="0 0 14 14"><path d="M5.5 0 L11 0 L8.2 4.8 L12 4.8 L3.2 13.5 L5.6 7.4 L2 7.4 Z" fill="#8c7a3c"/></svg>
<div class="l" style="left:911px;top:419px;width:216px;height:1px"></div>
<div class="lab" style="top:421px">卖一</div><div class="pr g" style="left:961px;top:421px">107.38</div>
<div class="pr y" style="left:1028px;top:421px">1.0/<span style="font:16px/18px 'Liberation Serif','Noto Serif CJK SC',serif;font-weight:300">笔</span></div>
<div class="pr" style="right:7px;top:421px;color:#e0e0e0">1<span style="font:16px/18px 'Liberation Serif','Noto Serif CJK SC',serif;font-weight:300">笔</span></div>
<svg width="1130" height="650" shape-rendering="crispEdges"><line x1="913" y1="439.5" x2="1125" y2="439.5" stroke="#b80000" stroke-dasharray="1 1"/><line x1="913" y1="560.5" x2="1125" y2="560.5" stroke="#b80000" stroke-dasharray="1 1"/></svg>
<div class="pr y" style="left:947px;top:439px;font-size:13px">1</div>
<div class="l" style="left:911px;top:543px;width:216px;height:1px"></div>
<div class="lab" style="top:543px">买一</div><div class="pr g" style="left:961px;top:543px">107.37</div>
<div class="pr y" style="left:1020px;top:543px">10.0/<span style="font:16px/18px 'Liberation Serif','Noto Serif CJK SC',serif;font-weight:300">笔</span></div>
<div class="pr" style="right:7px;top:543px;color:#e0e0e0">2<span style="font:16px/18px 'Liberation Serif','Noto Serif CJK SC',serif;font-weight:300">笔</span></div>
<div class="pr y" style="left:938px;top:561px;font-size:13px">15</div>
<div class="pr y" style="left:987px;top:561px;font-size:13px">5</div>
<svg width="1130" height="650" shape-rendering="crispEdges">
<rect x="1019" y="4" width="1" height="1" fill="#00a000"/>
<rect x="1018" y="5" width="3" height="1" fill="#00a000"/>
<rect x="1017" y="6" width="5" height="1" fill="#00a000"/>
<rect x="1019" y="7" width="1" height="1" fill="#00a000"/>
<rect x="1018" y="8" width="3" height="1" fill="#00a000"/>
<rect x="1017" y="9" width="5" height="1" fill="#00a000"/>
<rect x="1017" y="348" width="5" height="1" fill="#ff0000"/>
<rect x="1018" y="349" width="3" height="1" fill="#ff0000"/>
<rect x="1019" y="350" width="1" height="1" fill="#ff0000"/>
<rect x="1017" y="351" width="5" height="1" fill="#ff0000"/>
<rect x="1018" y="352" width="3" height="1" fill="#ff0000"/>
<rect x="1019" y="353" width="1" height="1" fill="#ff0000"/>
<rect x="1129" y="29" width="1" height="1" fill="#909090"/>
<rect x="1129" y="36" width="1" height="1" fill="#909090"/>
<rect x="1129" y="51" width="1" height="1" fill="#909090"/>
<rect x="1129" y="56" width="1" height="1" fill="#909090"/>
<rect x="1129" y="67" width="1" height="1" fill="#909090"/>
<rect x="1129" y="71" width="1" height="1" fill="#909090"/>
<rect x="1129" y="103" width="1" height="1" fill="#909090"/>
<rect x="1129" y="120" width="1" height="1" fill="#909090"/>
<rect x="1129" y="139" width="1" height="1" fill="#909090"/>
<rect x="1129" y="157" width="1" height="1" fill="#909090"/>
<rect x="1129" y="175" width="1" height="1" fill="#909090"/>
<rect x="1129" y="193" width="1" height="1" fill="#909090"/>
<rect x="1129" y="230" width="1" height="1" fill="#909090"/>
<rect x="1129" y="266" width="1" height="1" fill="#909090"/>
<rect x="1129" y="302" width="1" height="1" fill="#909090"/>
<rect x="1129" y="338" width="1" height="1" fill="#909090"/>
<rect x="8" y="649" width="1" height="1" fill="#c0c0c0"/>
<rect x="11" y="649" width="1" height="1" fill="#c0c0c0"/>
<rect x="16" y="649" width="1" height="1" fill="#c0c0c0"/>
<rect x="20" y="649" width="1" height="1" fill="#c0c0c0"/>
<rect x="107" y="649" width="1" height="1" fill="#c0c0c0"/>
<rect x="48" y="649" width="1" height="1" fill="#c0c000"/>
<rect x="51" y="649" width="1" height="1" fill="#c0c000"/>
<rect x="56" y="649" width="1" height="1" fill="#c0c000"/>
<rect x="86" y="649" width="1" height="1" fill="#c0c000"/>
</svg>
<div style="position:absolute;left:996px;top:598px;width:134px;height:52px;background:#000"></div>
<div style="position:absolute;left:998px;top:607px;font:bold 20.6px/28px 'Liberation Serif','Noto Serif CJK SC',serif;color:#fff;white-space:nowrap">乐淘公式网</div>
<div style="position:absolute;left:1001px;top:631px;font:bold 15px/16px 'Liberation Serif',serif;color:#fff;white-space:nowrap">www.60lt.com</div>
</div></body></html>
